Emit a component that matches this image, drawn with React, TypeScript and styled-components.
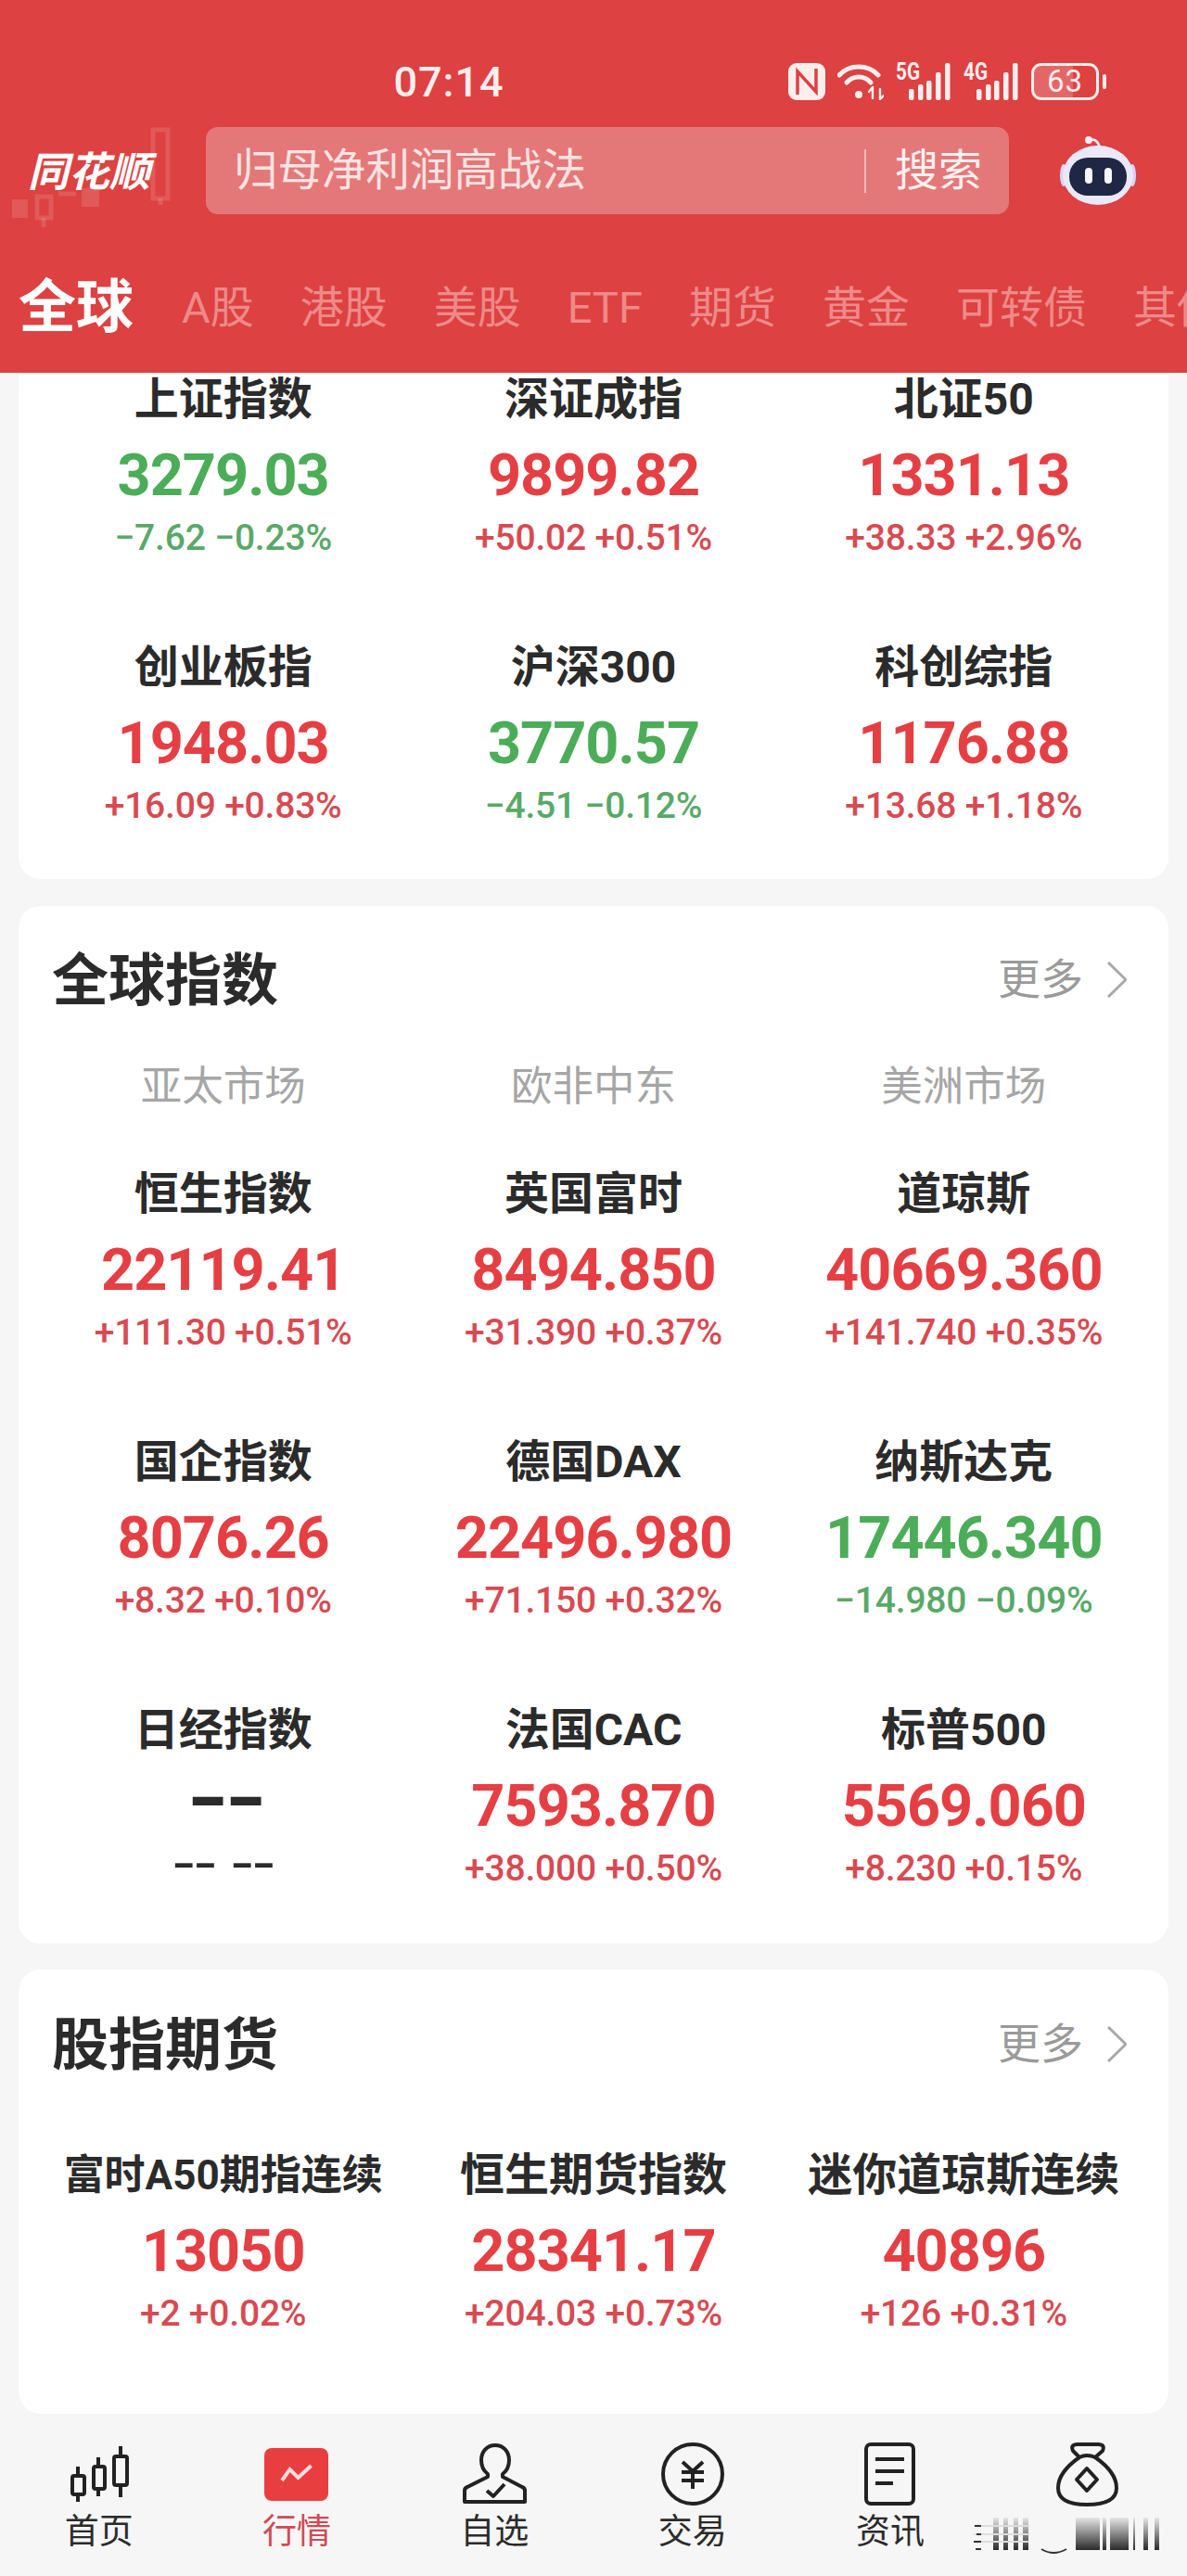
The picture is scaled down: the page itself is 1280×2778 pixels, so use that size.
import React from 'react';
import styled, { createGlobalStyle } from 'styled-components';

const FONT = `Roboto, "Noto Sans CJK SC", sans-serif`;

type Tone = 'up' | 'down' | 'none';

const valueColors: Record<Tone, string> = { up: '#e53f44', down: '#4cad58', none: '#2b2b2b' };
const subColors: Record<Tone, string> = { up: '#d84a52', down: '#58a968', none: '#2b2b2b' };

const GlobalStyle = createGlobalStyle`
	html, body {
		margin: 0;
		padding: 0;
		background: #f6f6f6;
		font-family: ${FONT};
	}
`;

const Page = styled.div`
	width: 1280px;
	height: 2778px;
	display: flex;
	flex-direction: column;
	overflow: hidden;
	background: #f6f6f6;
`;

const Header = styled.header`
	height: 402px;
	flex: none;
	background: #dd4141;
	overflow: hidden;
`;

const StatusBar = styled.div`
	height: 48px;
	margin-top: 64px;
	display: flex;
	align-items: center;
	justify-content: space-between;
	padding: 0 95px 0 424px;
	color: #fdeeee;
`;

const Clock = styled.span`
	width: 120px;
	text-align: center;
	font-size: 45px;
	letter-spacing: 1px;
	font-weight: 500;
`;

const StatusIcons = styled.div`
	display: flex;
	align-items: center;
	gap: 13px;
`;

const Battery = styled.div`
	position: relative;
	width: 73px;
	height: 40px;
	box-sizing: border-box;
	border: 3px solid #fdeeee;
	border-radius: 11px;
	background: linear-gradient(90deg, rgba(255, 255, 255, 0.2) 63%, transparent 63%);
	display: flex;
	align-items: center;
	justify-content: center;
	font-size: 33px;
	line-height: 34px;
	letter-spacing: 1px;
	&::after {
		content: '';
		position: absolute;
		right: -11px;
		top: 9px;
		width: 4px;
		height: 16px;
		border-radius: 2px;
		background: #fdeeee;
	}
`;

const SearchRow = styled.div`
	height: 94px;
	margin-top: 25px;
	display: flex;
	align-items: center;
`;

const Logo = styled.div`
	position: relative;
	width: 222px;
	height: 94px;
	flex: none;
	display: flex;
	align-items: center;
	padding-left: 30px;
	box-sizing: border-box;
	color: #fff;
	font-size: 44px;
	font-weight: 700;
	font-style: italic;
	svg {
		position: absolute;
		left: 0;
		top: 0;
	}
	span {
		position: relative;
		margin-top: -4px;
	}
`;

const SearchBox = styled.div`
	width: 866px;
	height: 94px;
	flex: none;
	box-sizing: border-box;
	display: flex;
	align-items: center;
	padding: 0 29px 0 30px;
	border-radius: 13px;
	background: #e47878;
	color: #fbe3e3;
`;

const Placeholder = styled.span`
	flex: 1;
	font-size: 47.500px;
	line-height: 60px;
`;

const SearchDivider = styled.span`
	width: 2px;
	height: 47px;
	background: #f2b9b9;
	margin-right: 31px;
`;

const SearchButton = styled.span`
	font-size: 47px;
	line-height: 60px;
	color: #fdf0f0;
`;

const RobotSlot = styled.div`
	flex: 1;
	display: flex;
	justify-content: center;
`;

const TabRow = styled.nav`
	height: 70px;
	margin-top: 66px;
	padding-left: 20px;
	display: flex;
	align-items: center;
	gap: 50px;
	white-space: nowrap;
`;

const MarketTab = styled.span<{ $active?: boolean }>`
	font-size: ${props => (props.$active ? '62px' : '47px')};
	font-weight: ${props => (props.$active ? 700 : 400)};
	margin-right: ${props => (props.$active ? '2px' : '0')};
	color: ${props => (props.$active ? '#fff' : '#ee8a8a')};
	line-height: 70px;
	flex: none;
`;

const Main = styled.main`
	flex: 1;
	min-height: 0;
	padding: 0 20px;
	display: flex;
	flex-direction: column;
	overflow: hidden;
`;

const Card = styled.section<{ $top: number; $bottom: number; $gap: number; $square?: boolean; $fill?: boolean }>`
	background: #fff;
	border-radius: ${props => (props.$square ? '0 0 24px 24px' : '24px')};
	padding: ${props => props.$top}px 21px ${props => props.$bottom}px;
	margin-bottom: ${props => props.$gap}px;
	flex: ${props => (props.$fill ? '1' : 'none')};
`;

const CardHead = styled.div`
	height: 80px;
	display: flex;
	align-items: center;
	justify-content: space-between;
	padding: 0 24px 0 15px;
`;

const CardTitle = styled.h2`
	margin: 0;
	font-size: 61px;
	line-height: 80px;
	font-weight: 700;
	color: #2b2b2b;
`;

const MoreLink = styled.div`
	display: flex;
	align-items: center;
	gap: 26px;
	font-size: 46px;
	line-height: 60px;
	padding-bottom: 4px;
	color: #9a9a9a;
`;

const RegionRow = styled.div`
	display: grid;
	grid-template-columns: repeat(3, 1fr);
	margin-top: 44px;
`;

const RegionLabel = styled.div`
	text-align: center;
	font-size: 44.500px;
	line-height: 60px;
	color: #a6a6a6;
`;

const QuoteGrid = styled.div<{ $top: number }>`
	display: grid;
	grid-template-columns: repeat(3, 1fr);
	row-gap: 85px;
	margin-top: ${props => props.$top}px;
`;

const Quote = styled.div`
	display: flex;
	flex-direction: column;
	align-items: center;
	white-space: nowrap;
`;

const QuoteName = styled.div<{ $compact?: boolean }>`
	font-size: ${props => (props.$compact ? '44px' : '48px')};
	line-height: 58px;
	margin-bottom: 2px;
	font-weight: 700;
	color: #2b2b2b;
`;

const QuoteValue = styled.div<{ $tone: Tone }>`
	margin-top: 16px;
	height: 70px;
	line-height: ${props => (props.$tone === 'none' ? '56px' : '70px')};
	font-size: ${props => (props.$tone === 'none' ? '72px' : '63px')};
	font-weight: ${props => (props.$tone === 'none' ? 900 : 700)};
	letter-spacing: ${props => (props.$tone === 'none' ? '-6px' : '-1px')};
	transform: ${props => (props.$tone === 'none' ? 'scaleX(1.55)' : 'none')};
	color: ${props => valueColors[props.$tone]};
`;

const QuoteChange = styled.div<{ $tone: Tone }>`
	margin-top: 7px;
	height: 51px;
	line-height: ${props => (props.$tone === 'none' ? '40px' : '50px')};
	font-size: ${props => (props.$tone === 'none' ? '50px' : '39px')};
	font-weight: 500;
	letter-spacing: ${props => (props.$tone === 'none' ? '-1px' : '-0.2px')};
	transform: ${props => (props.$tone === 'none' ? 'scaleX(1.45)' : 'none')};
	color: ${props => subColors[props.$tone]};
`;

const TabBar = styled.footer`
	height: 175px;
	flex: none;
	background: #f6f6f6;
	display: grid;
	grid-template-columns: repeat(6, 1fr);
	padding-top: 27px;
	box-sizing: border-box;
`;

const TabItem = styled.div`
	display: flex;
	flex-direction: column;
	align-items: center;
`;

const TabIcon = styled.div`
	height: 76px;
	display: flex;
	align-items: center;
	justify-content: center;
`;

const TabLabel = styled.span<{ $active?: boolean }>`
	font-size: 37px;
	line-height: 50px;
	color: ${props => (props.$active ? '#cf4a55' : '#2b2b2b')};
`;

const Smear = styled.svg`
	margin-top: 9px;
	transform: translateX(-23px);
`;

const NfcIcon = () => (
	<svg width="40" height="40" viewBox="0 0 40 40">
		<rect width="40" height="40" rx="9" fill="#fdeeee" />
		<path d="M10 34V9L30 31V6" fill="none" stroke="#dd4141" strokeWidth="3.5" />
	</svg>
);

const WifiIcon = () => (
	<svg width="50" height="40" viewBox="0 0 50 40" fill="none" stroke="#fdeeee" strokeLinecap="round">
		<path d="M2 13C13 1 33 1 44 13" strokeWidth="5" />
		<path d="M10 21C17 13 29 13 36 21" strokeWidth="5" />
		<circle cx="23" cy="34" r="4" fill="#fdeeee" stroke="none" />
		<path d="M38 27V38M34 31L38 26M46 39V28M50 35L46 39" strokeWidth="2.400" />
	</svg>
);

const signalBars: [number, number][] = [[14, 28], [24, 23], [33, 19], [43, 10], [53, 0]];

const SignalIcon = ({ label }: { label: string }) => (
	<svg width="60" height="40" viewBox="0 0 60 40" fill="#fdeeee" overflow="visible">
		<text x="0" y="18" fontFamily="Roboto, sans-serif" fontSize="25" fontWeight="700" textLength="26" lengthAdjust="spacingAndGlyphs">{label}</text>
		{signalBars.map(([x, y]) => <rect key={x} x={x} y={y} width="5.500" height={40 - y} rx="2" />)}
	</svg>
);

const RobotIcon = () => (
	<svg width="82" height="74" viewBox="0 0 82 74">
		<path d="M31 4C37 2 41 5 43 12" fill="none" stroke="#ece8fb" strokeWidth="2.500" />
		<circle cx="31" cy="4" r="4" fill="#f3effd" />
		<ellipse cx="4" cy="42" rx="4" ry="12" fill="#d9d4f3" />
		<ellipse cx="78" cy="42" rx="4" ry="12" fill="#d9d4f3" />
		<ellipse cx="41" cy="42" rx="38" ry="32" fill="#ebe8fa" />
		<rect x="10" y="23" width="62" height="41" rx="20" fill="#1f2744" />
		<rect x="27" y="34" width="8" height="17" rx="4" fill="#f6f6fb" />
		<rect x="48" y="34" width="8" height="17" rx="4" fill="#f6f6fb" />
	</svg>
);

const LogoCandles = () => (
	<svg width="222" height="110" viewBox="0 0 222 110" fill="none" stroke="rgba(255,255,255,0.13)" strokeWidth="5">
		<rect x="165" y="3" width="16" height="74" />
		<path d="M173 77V84" />
		<rect x="13" y="78" width="17" height="20" fill="rgba(255,255,255,0.13)" stroke="none" />
		<rect x="40" y="75" width="15" height="23" />
		<path d="M47 98V108" />
		<path d="M63 72H82" />
		<rect x="88" y="66" width="19" height="20" fill="rgba(255,255,255,0.13)" stroke="none" />
	</svg>
);

const homeIcon = (
	<svg width="66" height="62" viewBox="0 0 66 62" fill="none" stroke="#222" strokeWidth="4">
		<rect x="4" y="33" width="13" height="20" rx="2" />
		<path d="M10 23V33M10 53V61" />
		<rect x="27" y="23" width="12" height="24" rx="2" />
		<path d="M32 13V23M32 47V55" />
		<rect x="49" y="12" width="14" height="31" rx="2" />
		<path d="M56 1V12M56 43V56" />
	</svg>
);

const marketIcon = (
	<svg width="69" height="57" viewBox="0 0 69 57">
		<rect width="69" height="57" rx="8" fill="#e83e40" />
		<path d="M19 35L27.500 23L36.500 32L50.500 19" fill="none" stroke="#fbdcdc" strokeWidth="4" />
	</svg>
);

const watchIcon = (
	<svg width="69" height="66" viewBox="0 0 69 66" fill="none" stroke="#222" strokeWidth="4" strokeLinejoin="round">
		<path d="M35 2C26 2 20 9 20 18C20 26 23 30 27 33V36L5 47Q2 48 2 51V63H67V51Q67 48 64 47L43 36V33C47 30 50 26 50 18C50 9 44 2 35 2Z" />
		<path d="M26 51L33 57L45 44" />
	</svg>
);

const tradeIcon = (
	<svg width="68" height="68" viewBox="0 0 68 68" fill="none" stroke="#222" strokeWidth="4">
		<ellipse cx="34" cy="34" rx="32" ry="32" />
		<path d="M23 21L34 31L45 21M22 32H46M22 41H46M34 31V50" />
	</svg>
);

const newsIcon = (
	<svg width="55" height="68" viewBox="0 0 55 68" fill="none" stroke="#222" strokeWidth="4">
		<rect x="2" y="2" width="51" height="64" rx="5" />
		<path d="M12 18H43M12 31H43M12 44H31" />
	</svg>
);

const bagIcon = (
	<svg width="68" height="70" viewBox="0 0 68 70" fill="none" stroke="#222" strokeWidth="4" strokeLinejoin="round">
		<path d="M25 17L18 10Q15 3 23 3H45Q53 3 50 10L42 17" />
		<path d="M25 17Q33 13 42 17C52 24 65 36 65 50C65 63 52 68 33 68C14 68 2 63 2 50C2 36 15 24 25 17Z" />
		<path d="M33 29L44 41L33 53L22 41Z" />
	</svg>
);

const smearBars: [number, number][] = [[21, 6], [32, 5], [43, 5], [53, 6], [110, 26], [139, 4], [147, 20], [172, 2], [183, 5], [195, 5]];

const SmearedLabel = () => (
	<Smear width="200" height="40" viewBox="0 0 200 40">
		<defs>
			<linearGradient id="smear" x1="0" y1="0" x2="0" y2="1">
				<stop offset="0" stopColor="#e6e6e6" />
				<stop offset="1" stopColor="#2a2a2a" />
			</linearGradient>
		</defs>
		{smearBars.map(([x, w]) => <rect key={x} x={x} y="0" width={w} height="35" fill="url(#smear)" />)}
		<path d="M0 9H60M0 18H60M0 26H60" stroke="#ddd" strokeWidth="2" />
		<path d="M1 9H8M3 18H8M0 26H8M2 34H8" stroke="#333" strokeWidth="2" />
		<path d="M73 34Q86 42 100 34" fill="none" stroke="#333" strokeWidth="2" />
	</Smear>
);

type QuoteData = { name: string; value: string; change: string; tone: Tone; compact?: boolean };

const q = (name: string, value: string, change: string, tone: Tone = 'up', compact = false): QuoteData => ({ name, value, change, tone, compact });

const domestic = [
	q('上证指数', '3279.03', '−7.62 −0.23%', 'down'),
	q('深证成指', '9899.82', '+50.02 +0.51%'),
	q('北证50', '1331.13', '+38.33 +2.96%'),
	q('创业板指', '1948.03', '+16.09 +0.83%'),
	q('沪深300', '3770.57', '−4.51 −0.12%', 'down'),
	q('科创综指', '1176.88', '+13.68 +1.18%'),
];

const globalIndexes = [
	q('恒生指数', '22119.41', '+111.30 +0.51%'),
	q('英国富时', '8494.850', '+31.390 +0.37%'),
	q('道琼斯', '40669.360', '+141.740 +0.35%'),
	q('国企指数', '8076.26', '+8.32 +0.10%'),
	q('德国DAX', '22496.980', '+71.150 +0.32%'),
	q('纳斯达克', '17446.340', '−14.980 −0.09%', 'down'),
	q('日经指数', '--', '-- --', 'none'),
	q('法国CAC', '7593.870', '+38.000 +0.50%'),
	q('标普500', '5569.060', '+8.230 +0.15%'),
];

const futures = [
	q('富时A50期指连续', '13050', '+2 +0.02%', 'up', true),
	q('恒生期货指数', '28341.17', '+204.03 +0.73%'),
	q('迷你道琼斯连续', '40896', '+126 +0.31%'),
];

const marketTabs = ['A股', '港股', '美股', 'ETF', '期货', '黄金', '可转债', '其他'];
const regions = ['亚太市场', '欧非中东', '美洲市场'];

const Quotes = ({ items, top }: { items: QuoteData[]; top: number }) => (
	<QuoteGrid $top={top}>
		{items.map(item => (
			<Quote key={item.name}>
				<QuoteName $compact={item.compact}>{item.name}</QuoteName>
				<QuoteValue $tone={item.tone}>{item.value}</QuoteValue>
				<QuoteChange $tone={item.tone}>{item.change}</QuoteChange>
			</Quote>
		))}
	</QuoteGrid>
);

const More = () => (
	<MoreLink>
		更多
		<svg width="21" height="39" viewBox="0 0 21 39" fill="none" stroke="#a8a8a8" strokeWidth="3">
			<path d="M1 1L20 19.500L1 38" />
		</svg>
	</MoreLink>
);

function App() {
	return (
		<Page>
			<GlobalStyle />
			<Header>
				<StatusBar>
					<Clock>07:14</Clock>
					<StatusIcons>
						<NfcIcon />
						<WifiIcon />
						<SignalIcon label="5G" />
						<SignalIcon label="4G" />
						<Battery>63</Battery>
					</StatusIcons>
				</StatusBar>
				<SearchRow>
					<Logo>
						<LogoCandles />
						<span>同花顺</span>
					</Logo>
					<SearchBox>
						<Placeholder>归母净利润高战法</Placeholder>
						<SearchDivider />
						<SearchButton>搜索</SearchButton>
					</SearchBox>
					<RobotSlot>
						<RobotIcon />
					</RobotSlot>
				</SearchRow>
				<TabRow>
					<MarketTab $active>全球</MarketTab>
					{marketTabs.map(tab => <MarketTab key={tab}>{tab}</MarketTab>)}
				</TabRow>
			</Header>
			<Main>
				<Card $top={0} $bottom={53} $gap={29} $square>
					<Quotes items={domestic} top={0} />
				</Card>
				<Card $top={41} $bottom={55} $gap={28}>
					<CardHead>
						<CardTitle>全球指数</CardTitle>
						<More />
					</CardHead>
					<RegionRow>
						{regions.map(region => <RegionLabel key={region}>{region}</RegionLabel>)}
					</RegionRow>
					<Quotes items={globalIndexes} top={57} />
				</Card>
				<Card $top={42} $bottom={0} $gap={0} $fill>
					<CardHead>
						<CardTitle>股指期货</CardTitle>
						<More />
					</CardHead>
					<Quotes items={futures} top={71} />
				</Card>
			</Main>
			<TabBar>
				<TabItem><TabIcon>{homeIcon}</TabIcon><TabLabel>首页</TabLabel></TabItem>
				<TabItem><TabIcon>{marketIcon}</TabIcon><TabLabel $active>行情</TabLabel></TabItem>
				<TabItem><TabIcon>{watchIcon}</TabIcon><TabLabel>自选</TabLabel></TabItem>
				<TabItem><TabIcon>{tradeIcon}</TabIcon><TabLabel>交易</TabLabel></TabItem>
				<TabItem><TabIcon>{newsIcon}</TabIcon><TabLabel>资讯</TabLabel></TabItem>
				<TabItem><TabIcon>{bagIcon}</TabIcon><SmearedLabel /></TabItem>
			</TabBar>
		</Page>
	);
}

export default App;
